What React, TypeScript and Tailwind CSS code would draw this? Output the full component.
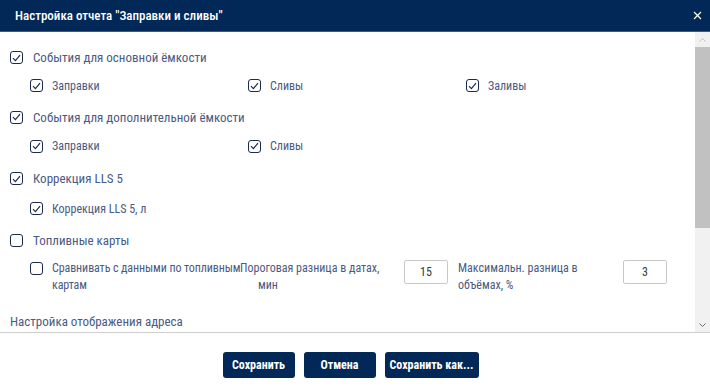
import React, { useState } from "react";

const Box = ({ checked, onClick }: { checked: boolean; onClick: () => void }) => (
  <button
    onClick={onClick}
    className="w-[13px] h-[13px] shrink-0 rounded-[3px] border border-[#1c2a4d] bg-white flex items-center justify-center"
  >
    {checked && (
      <svg width="9" height="8" viewBox="0 0 9 8" fill="none">
        <path d="M1 4.2L3.4 6.6L8 1.2" stroke="#1c2a4d" strokeWidth="1.2" />
      </svg>
    )}
  </button>
);

const MainRow = ({
  label,
  checked,
  onClick,
  className,
}: {
  label: string;
  checked: boolean;
  onClick: () => void;
  className: string;
}) => (
  <div className={`flex items-center h-[20px] pl-[10px] gap-[10px] ${className}`}>
    <Box checked={checked} onClick={onClick} />
    <span className="text-[13px] text-[#4a5a82]">{label}</span>
  </div>
);

const SubItem = ({ label, checked, onClick }: { label: string; checked: boolean; onClick: () => void }) => (
  <div className="flex items-center gap-[9px] w-[218px]">
    <Box checked={checked} onClick={onClick} />
    <span className="text-[12px] text-[#4a5a82]">{label}</span>
  </div>
);

export default function App() {
  const [state, setState] = useState<Record<string, boolean>>({
    main: true,
    mainRefuel: true,
    mainDrain: true,
    mainFill: true,
    extra: true,
    extraRefuel: true,
    extraDrain: true,
    lls: true,
    llsL: true,
    cards: false,
    compare: false,
  });
  const [dateDiff, setDateDiff] = useState("15");
  const [volDiff, setVolDiff] = useState("3");

  const toggle = (key: string) => () => setState({ ...state, [key]: !state[key] });

  return (
    <div className="w-[710px] h-[388px] bg-white flex flex-col overflow-hidden font-[Roboto,sans-serif] font-stretch-semi-condensed">
      <div className="h-[32px] shrink-0 bg-[#012856] border-b border-[#3b5a86] flex items-center justify-between pl-[15px] pr-[8px]">
        <span className="text-white text-[13px] font-medium">
          Настройка отчета "Заправки и сливы"
        </span>
        <svg width="9" height="9" viewBox="0 0 9 9">
          <path d="M1 1L8 8M8 1L1 8" stroke="#ffffff" strokeWidth="1.2" />
        </svg>
      </div>

      <div className="h-[301px] shrink-0 flex border-b border-[#cfcfcf]">
        <div className="flex-1 overflow-hidden flex flex-col">
          <MainRow className="mt-[16px]" label="События для основной ёмкости" checked={state.main} onClick={toggle("main")} />
          <div className="flex items-center h-[20px] pl-[30px] mt-[8px]">
            <SubItem label="Заправки" checked={state.mainRefuel} onClick={toggle("mainRefuel")} />
            <SubItem label="Сливы" checked={state.mainDrain} onClick={toggle("mainDrain")} />
            <SubItem label="Заливы" checked={state.mainFill} onClick={toggle("mainFill")} />
          </div>

          <MainRow className="mt-[12px]" label="События для дополнительной ёмкости" checked={state.extra} onClick={toggle("extra")} />
          <div className="flex items-center h-[20px] pl-[30px] mt-[9px]">
            <SubItem label="Заправки" checked={state.extraRefuel} onClick={toggle("extraRefuel")} />
            <SubItem label="Сливы" checked={state.extraDrain} onClick={toggle("extraDrain")} />
          </div>

          <MainRow className="mt-[13px]" label="Коррекция LLS 5" checked={state.lls} onClick={toggle("lls")} />
          <div className="flex items-center h-[20px] pl-[30px] mt-[10px]">
            <SubItem label="Коррекция LLS 5, л" checked={state.llsL} onClick={toggle("llsL")} />
          </div>

          <MainRow className="mt-[12px]" label="Топливные карты" checked={state.cards} onClick={toggle("cards")} />
          <div className="flex items-start pl-[30px] mt-[10px] text-[12px] leading-[17px] text-[#4a5a82]">
            <div className="mt-[2px]">
              <Box checked={state.compare} onClick={toggle("compare")} />
            </div>
            <span className="ml-[9px] w-[188px] whitespace-nowrap tracking-[-0.1px]">
              Сравнивать с данными по топливным
              <br />
              картам
            </span>
            <span className="w-[164px]">
              Пороговая разница в датах,
              <br />
              <span className="ml-[18px]">мин</span>
            </span>
            <input
              value={dateDiff}
              onChange={(e) => setDateDiff(e.target.value)}
              className="w-[44px] h-[24px] border border-[#c9c9c9] rounded-[2px] text-center text-[12px] text-[#3a3a3a] outline-none"
            />
            <span className="ml-[10px] w-[165px]">
              Максимальн. разница в
              <br />
              объёмах, %
            </span>
            <input
              value={volDiff}
              onChange={(e) => setVolDiff(e.target.value)}
              className="w-[44px] h-[24px] border border-[#c9c9c9] rounded-[2px] text-center text-[12px] text-[#3a3a3a] outline-none"
            />
          </div>

          <div className="pl-[10px] mt-[18px] h-[20px] flex items-center text-[13px] text-[#4a5a82]">
            Настройка отображения адреса
          </div>
        </div>

        <div className="w-[15px] shrink-0 bg-[#f1f1f1] flex flex-col items-center">
          <div className="h-[15px] flex items-center justify-center">
            <svg width="7" height="4" viewBox="0 0 7 4">
              <path d="M0.5 3.5L3.5 0.5L6.5 3.5" stroke="#c0c0c0" fill="none" />
            </svg>
          </div>
          <div className="w-full h-[181px] bg-[#c1c1c1]" />
          <div className="flex-1" />
          <div className="h-[15px] flex items-center justify-center">
            <svg width="7" height="4" viewBox="0 0 7 4">
              <path d="M0.5 0.5L3.5 3.5L6.5 0.5" stroke="#6a6a6a" fill="none" />
            </svg>
          </div>
        </div>
      </div>

      <div className="flex-1 flex justify-center gap-[9px] pt-[19px] pr-[9px]">
        <button className="w-[72px] h-[26px] rounded-[3px] bg-[#012856] text-white text-[12px] font-bold">
          Сохранить
        </button>
        <button className="w-[72px] h-[26px] rounded-[3px] bg-[#012856] text-white text-[12px] font-bold">
          Отмена
        </button>
        <button className="w-[94px] h-[26px] rounded-[3px] bg-[#012856] text-white text-[12px] font-bold">
          Сохранить как...
        </button>
      </div>
    </div>
  );
}
